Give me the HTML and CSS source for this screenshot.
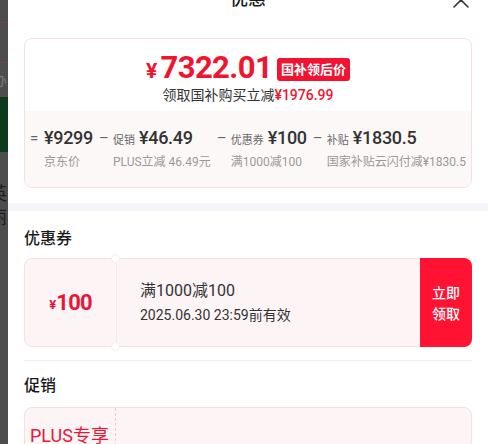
FILE: index.html
```
<!DOCTYPE html>
<html lang="zh-CN">
<head>
    <meta charset="UTF-8">
    <meta name="viewport" content="width=device-width, initial-scale=1.0">
    <title>优惠</title>
    <link rel="stylesheet" href="styles.css">
</head>
<body>
    <div class="page">
        <div class="backdrop">
            <div class="bd-block bd-top"></div>
            <div class="bd-block bd-row"></div>
            <div class="bd-text">办</div>
            <div class="bd-green"></div>
            <div class="bd-title">英</div>
            <div class="bd-title">丽</div>
        </div>

        <div class="sheet">
            <header class="sheet-head">
                <span></span>
                <h2 class="sheet-title">优惠</h2>
                <button class="close" aria-label="关闭">
                    <svg width="18" height="18" viewBox="0 0 18 18" fill="none" stroke="#333" stroke-width="1.6" stroke-linecap="round">
                        <path d="M2 2 L16 16 M16 2 L2 16"/>
                    </svg>
                </button>
            </header>

            <div class="price-card">
                <div class="price-main">
                    <div class="price-line">
                        <span class="price"><span class="price-yen">¥</span>7322.01</span>
                        <span class="price-tag">国补领后价</span>
                    </div>
                    <p class="price-note">领取国补购买立减<span class="red">¥1976.99</span></p>
                </div>
                <div class="calc">
                    <div class="calc-item">
                        <span class="op">=</span>
                        <div>
                            <div class="calc-top"><span class="calc-val">¥9299</span></div>
                            <div class="calc-desc">京东价</div>
                        </div>
                    </div>
                    <div class="calc-item">
                        <span class="op">–</span>
                        <div>
                            <div class="calc-top"><span class="calc-label">促销</span><span class="calc-val">¥46.49</span></div>
                            <div class="calc-desc">PLUS立减 46.49元</div>
                        </div>
                    </div>
                    <div class="calc-item">
                        <span class="op">–</span>
                        <div>
                            <div class="calc-top"><span class="calc-label">优惠券</span><span class="calc-val">¥100</span></div>
                            <div class="calc-desc">满1000减100</div>
                        </div>
                    </div>
                    <div class="calc-item">
                        <span class="op">–</span>
                        <div>
                            <div class="calc-top"><span class="calc-label">补贴</span><span class="calc-val">¥1830.5</span></div>
                            <div class="calc-desc">国家补贴云闪付减¥1830.5</div>
                        </div>
                    </div>
                </div>
            </div>

            <div class="band"></div>

            <section class="block">
                <h3 class="block-title">优惠券</h3>
                <div class="coupon">
                    <div class="coupon-amount"><span class="coupon-yen">¥</span>100</div>
                    <div class="coupon-info">
                        <p class="coupon-rule">满1000减100</p>
                        <p class="coupon-date">2025.06.30 23:59前有效</p>
                    </div>
                    <button class="coupon-btn">立即<br>领取</button>
                </div>
            </section>

            <section class="block">
                <h3 class="block-title">促销</h3>
                <div class="promo">
                    <div class="promo-tag">PLUS专享</div>
                    <div class="promo-body"></div>
                </div>
            </section>
        </div>
    </div>
</body>
</html>
```

FILE: styles.css
```
:root {
    --red: #f0142f;
    --red-btn: #ff1232;
    --text: #1a1a1a;
    --text-2: #333333;
    --muted: #999999;
    --pink-bg: #fdf4f5;
    --pink-line: #f5e0e4;
}

* {
    margin: 0;
    padding: 0;
    box-sizing: border-box;
}

body {
    font-family: "Roboto", "Noto Sans CJK SC", sans-serif;
    color: var(--text-2);
    background: #4d4d4d;
    width: 488px;
    height: 444px;
    overflow: hidden;
}

.page {
    display: flex;
    height: 444px;
}

/* dimmed page behind the sheet */
.backdrop {
    width: 8px;
    flex: 0 0 8px;
    background: #4d4d4d;
    overflow: hidden;
    display: flex;
    flex-direction: column;
    font-family: "Noto Sans CJK SC", sans-serif;
    white-space: nowrap;
}

.bd-block {
    border-bottom: 1px solid #6a4848;
}

.bd-top {
    height: 23px;
}

.bd-row {
    height: 40px;
}

.bd-text {
    margin: 8px 0 0 -8px;
    font-size: 15px;
    line-height: 18px;
    color: #7a7a7a;
}

.bd-green {
    margin-top: 8px;
    height: 55px;
    background: #0b3b1b;
}

.bd-title {
    margin-left: -11px;
    font-size: 18px;
    line-height: 24px;
    color: #1e1e1e;
}

.bd-green + .bd-title {
    margin-top: 28px;
}

.sheet {
    flex: 1;
    background: #ffffff;
    overflow: hidden;
}

.sheet-head {
    display: grid;
    grid-template-columns: 1fr auto 1fr;
    align-items: center;
    height: 32px;
    margin-top: -16px;
    padding: 0 18px;
}

.sheet-title {
    font-size: 18px;
    font-weight: 500;
    color: var(--text);
    padding-bottom: 6px;
}

.close {
    justify-self: end;
    border: none;
    background: none;
    width: 18px;
    height: 18px;
    display: flex;
}

.price-card {
    margin: 22px 16px 0;
    border: 1px solid #f3e1e4;
    border-radius: 8px;
    overflow: hidden;
}

.price-main {
    padding: 14px 0 6px;
    text-align: center;
}

.price-line {
    display: flex;
    justify-content: center;
    align-items: center;
    height: 32px;
    gap: 5px;
}

.price {
    color: var(--red);
    font-size: 31px;
    font-weight: 700;
    letter-spacing: -0.6px;
    line-height: 32px;
}

.price-yen {
    font-size: 21px;
    margin-right: 4px;
}

.price-tag {
    background: #f21331;
    color: #ffffff;
    font-size: 13px;
    font-weight: 700;
    line-height: 23px;
    height: 23px;
    padding: 0 4px;
    border-radius: 3px;
}

.price-note {
    font-size: 14px;
    line-height: 20px;
    color: var(--text-2);
}

.red {
    color: var(--red);
    font-weight: 500;
}

.calc {
    display: flex;
    justify-content: space-between;
    padding: 16px 5px;
    background: #fdf8f8;
}

.calc-item {
    display: flex;
}

.op {
    width: 14px;
    font-size: 15px;
    line-height: 22px;
    color: #666666;
}

.calc-top {
    display: flex;
    align-items: baseline;
    height: 22px;
    white-space: nowrap;
}

.calc-label {
    font-size: 11px;
    color: #666666;
    margin-right: 4px;
}

.calc-val {
    font-size: 18px;
    font-weight: 500;
    line-height: 22px;
    color: var(--text-2);
    letter-spacing: -0.3px;
}

.calc-desc {
    margin-top: 4px;
    font-size: 12px;
    line-height: 18px;
    color: var(--muted);
    white-space: nowrap;
}

.band {
    margin-top: 15px;
    height: 8px;
    background: #f5f5f9;
}

.block {
    margin: 0 16px;
    padding: 17px 0 13px;
}

.block + .block {
    border-top: 1px solid #eeeeee;
    padding-top: 14px;
}

.block-title {
    font-size: 16px;
    font-weight: 500;
    line-height: 22px;
    color: var(--text);
    margin-bottom: 8px;
}

.block + .block .block-title {
    margin-bottom: 10px;
}

.coupon {
    display: flex;
    height: 89px;
    border: 1px solid var(--pink-line);
    border-radius: 8px;
    background: var(--pink-bg);
}

.coupon-amount {
    position: relative;
    width: 92px;
    flex: 0 0 92px;
    border-right: 1px solid #f6e9eb;
    display: flex;
    align-items: center;
    justify-content: center;
    color: #e8173a;
    font-size: 22px;
    font-weight: 700;
    letter-spacing: -0.8px;
}

.coupon-yen {
    font-size: 13px;
    margin-right: 1px;
    margin-top: 3px;
}

.coupon-amount::before,
.coupon-amount::after {
    content: '';
    position: absolute;
    right: -4px;
    width: 7px;
    height: 7px;
    border-radius: 50%;
    background: #ffffff;
    border: 1px solid #f8ecee;
}

.coupon-amount::before {
    top: -5px;
}

.coupon-amount::after {
    bottom: -5px;
}

.coupon-info {
    flex: 1;
    padding-left: 23px;
    display: flex;
    flex-direction: column;
    justify-content: center;
    gap: 3px;
}

.coupon-rule {
    font-size: 16px;
    line-height: 22px;
    color: var(--text-2);
}

.coupon-date {
    font-size: 14px;
    line-height: 20px;
    color: var(--text-2);
}

.coupon-btn {
    width: 52px;
    margin: -1px -1px -1px 0;
    border: none;
    border-radius: 0 8px 8px 0;
    background: var(--red-btn);
    color: #ffffff;
    font-family: inherit;
    font-size: 14px;
    font-weight: 500;
    line-height: 21px;
    padding-top: 3px;
}

.promo {
    display: flex;
    height: 90px;
    border: 1px solid var(--pink-line);
    border-radius: 8px;
    background: var(--pink-bg);
}

.promo-tag {
    width: 91px;
    flex: 0 0 91px;
    border-right: 1px dashed #f0c6ce;
    padding: 16px 0 0 5px;
    font-size: 18px;
    line-height: 24px;
    color: #e8173a;
    white-space: nowrap;
}

.promo-body {
    flex: 1;
}
```
